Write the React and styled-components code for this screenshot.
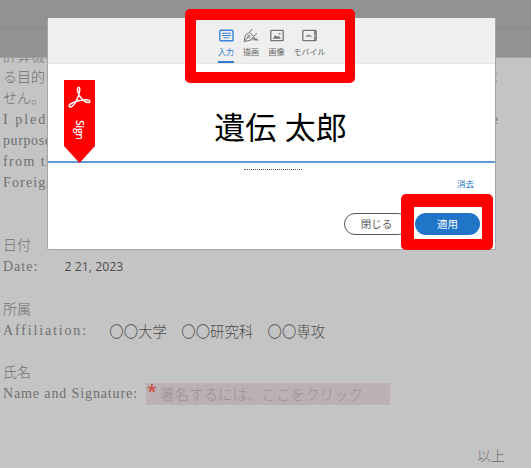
import React from 'react';
import styled, { createGlobalStyle } from 'styled-components';

const Global = createGlobalStyle`
  * { box-sizing: border-box; }
  body { margin: 0; background: #c4c4c4; overflow: hidden; }
`;

const Page = styled.main`
  position: relative;
  width: 531px;
  height: 468px;
  overflow: hidden;
  background: #c4c4c4;
  font-family: 'Noto Sans', 'Noto Sans CJK JP', sans-serif;
`;

const TopBars = styled.header`
  position: relative;
  z-index: 1;
  height: 58px;
  background: #929292;
  border-bottom: 1px solid #a0a0a0;
  &::before {
    content: '';
    display: block;
    height: 28px;
    border-bottom: 1px solid #8a8a8a;
  }
`;

const Document = styled.section`
  margin-top: -12px;
  padding: 0 25px 0 3px;
  color: #707070;
  font: 300 14px/21.06px 'Liberation Serif', 'Noto Sans CJK JP', serif;
`;

const Line = styled.div`
  display: flex;
  justify-content: ${(p) => (p.$end ? 'flex-end' : 'space-between')};
  height: 21.06px;
  padding-right: ${(p) => (p.$end ? 1 : 7)}px;
  white-space: pre;
`;

const Latin = styled.span`
  font-size: 14px;
  letter-spacing: ${(p) => p.$track}px;
`;

const Field = styled.div`
  display: flex;
  align-items: center;
  height: 21.06px;
  white-space: pre;
`;

const Label = styled(Latin)`
  flex: none;
  width: ${(p) => p.$cells * 7.11}px;
`;

const Value = styled.span`
  margin-left: ${(p) => p.$gap}px;
  color: #4c4c4c;
  font: ${(p) => (p.$small ? '400 12.3px' : '300 14.4px')}/19px ${(p) => (p.$small ? "'Open Sans'" : "'Noto Sans CJK JP'")}, sans-serif;
`;

const SignField = styled.div`
  display: flex;
  width: 244px;
  height: 22px;
  margin: 2px 0 0 8px;
  background: #bbb0b2;
  border: 1px solid #c0b0b5;
  color: #969296;
  font: 300 14.5px/20px 'Noto Sans CJK JP', sans-serif;
`;

const Required = styled.span`
  width: 13px;
  color: #d04a48;
  font: 600 18px/15px 'Open Sans', sans-serif;
`;

const Dialog = styled.section`
  position: absolute;
  z-index: 2;
  left: 47px;
  top: 18px;
  width: 449px;
  height: 232px;
  display: flex;
  flex-direction: column;
  background: #fff;
  border: 1px solid #a5a5a5;
  border-top: 0;
  border-radius: 3px 0 0 2px;
`;

const Tabs = styled.nav`
  display: flex;
  height: 46px;
  padding: 10px 0 0 166px;
  background: #efefef;
  border-bottom: 1px solid #e6e6e6;
`;

const Tab = styled.button`
  display: flex;
  flex-direction: column;
  align-items: center;
  width: ${(p) => p.$width}px;
  padding: 0;
  border: 0;
  background: none;
  color: ${(p) => (p.$active ? '#2c7bd0' : '#666')};
  font: 400 8px/12px 'Noto Sans CJK JP', sans-serif;
  white-space: nowrap;
  svg { display: block; height: 16px; margin-bottom: 2px; color: ${(p) => (p.$active ? '#3a86d8' : '#747474')}; }
`;

const TabLabel = styled.span`
  display: block;
  height: 17px;
  border-bottom: 2px solid ${(p) => (p.$active ? '#2c7bd0' : 'transparent')};
`;

const SignArea = styled.div`
  position: relative;
  display: flex;
  justify-content: center;
  height: 99px;
  border-bottom: 2px solid #619bd5;
`;

const Name = styled.div`
  padding: 39px 0 0 18px;
  color: #000;
  font: 400 31px/46px 'Noto Sans CJK JP', sans-serif;
  word-spacing: 1.5px;
  white-space: nowrap;
`;

const Ribbon = styled.div`
  position: absolute;
  left: 16px;
  top: 16px;
  width: 31px;
  height: 83px;
  background: #f00;
  clip-path: polygon(0 0, 100% 0, 100% 66px, 50% 100%, 0 66px);
  svg { display: block; margin: 6px 0 0 4px; }
`;

const RibbonText = styled.span`
  display: block;
  width: 12px;
  height: 22px;
  margin: 10px 0 0 10px;
  color: #fff;
  font: 600 10.5px/12px 'Open Sans', sans-serif;
  letter-spacing: -0.4px;
  writing-mode: vertical-rl;
`;

const Dotted = styled.div`
  width: 58px;
  height: 2px;
  margin: 6px 0 0 196px;
  border-top: 1px dotted #555;
`;

const Clear = styled.button`
  align-self: flex-end;
  margin: 5px 21px 0 0;
  padding: 0;
  border: 0;
  background: none;
  color: #2474ca;
  font: 400 8.5px/14px 'Noto Sans CJK JP', sans-serif;
`;

const Actions = styled.footer`
  display: flex;
  gap: 6px;
  margin: 23px 0 0 296px;
`;

const Action = styled.button`
  width: 65px;
  height: 22px;
  padding: 0;
  border-radius: 11px;
  border: ${(p) => (p.$primary ? '0' : '1px solid #555')};
  background: ${(p) => (p.$primary ? '#2175c9' : '#fff')};
  color: ${(p) => (p.$primary ? '#fff' : '#5b5b5b')};
  font: 400 10.5px/20px 'Noto Sans CJK JP', sans-serif;
`;

const Highlight = styled.div`
  position: absolute;
  z-index: 3;
  left: ${(p) => p.$x}px;
  top: ${(p) => p.$y}px;
  width: ${(p) => p.$w}px;
  height: ${(p) => p.$h}px;
  border: solid #f00;
  border-width: ${(p) => p.$edges};
  border-radius: 5px;
  pointer-events: none;
`;

const KeyboardIcon = () => (
  <svg width="15" height="16" viewBox="0 0 15 16" fill="none" stroke="currentColor">
    <rect x=".8" y="2.3" width="13.2" height="10.4" rx=".8" strokeWidth="1.4" />
    <path d="M3 5.2h9M3 7.5h9M4.5 9.8h6" strokeWidth="1.1" />
  </svg>
);

const PenIcon = () => (
  <svg width="16" height="16" viewBox="0 0 16 16" fill="none" stroke="currentColor" strokeWidth="1">
    <path d="M1.2 13.5 2.2 7.2 6.5 4.4 10.5 8.4 8 12 1.2 13.5Zm0 0 4-4.8" />
    <circle cx="5.8" cy="8.4" r="1.1" />
    <path d="M6.5 4.4 9.2.9M10.5 8.4 14 5.5M9.4 12.4l2-3 .3 3 1.4-2 .4 2 1-1 .8 1.2" />
  </svg>
);

const ImageIcon = () => (
  <svg width="14" height="16" viewBox="0 0 14 16" fill="none" stroke="currentColor">
    <rect x=".8" y="2.4" width="12.4" height="10.3" rx=".5" strokeWidth="1.3" />
    <path d="M2.8 10.8 5.3 7l2 2 1.2-1.2 2.7 3Z" fill="currentColor" stroke="none" />
    <circle cx="9.6" cy="5.6" r=".9" fill="currentColor" stroke="none" />
  </svg>
);

const MobileIcon = () => (
  <svg width="15" height="16" viewBox="0 0 15 16" fill="none" stroke="currentColor">
    <rect x=".8" y="2.4" width="13.4" height="10.3" rx="1" strokeWidth="1.3" />
    <path d="M12.9 3v9.5" strokeWidth="1.5" />
    <path d="m4 8.8 1.5-2 .3 2 1.4-2 .3 2 1-1.2.5 1h1" strokeWidth=".8" />
    <circle cx="12.9" cy="7.6" r=".5" fill="#fff" stroke="none" />
  </svg>
);

const AcrobatIcon = () => (
  <svg width="24" height="24" viewBox="0 0 24 24" fill="none" stroke="#fff" strokeWidth="1.5">
    <path d="M10.4 7.5C8.7 3.5 9.4 1.5 10.7 1.5c1.5 0 1.4 3.3-.2 8C9.1 14 5.3 21 2.6 21 .1 21 .6 18.5 4.7 16.8 9 15 14.5 13.3 19 13.7c3.6.3 3.5 2.8 1.3 2.8-3.8 0-8.3-4.6-9.9-9Z" />
  </svg>
);

export default function App() {
  return (
    <>
      <Global />
      <Page>
        <TopBars />
        <Document>
          <Line>計算機の</Line>
          <Line><span>る目的</span><span>ま</span></Line>
          <Line>せん。</Line>
          <Line><Latin $track={2}>I pled</Latin><Latin $track={1}>the</Latin></Line>
          <Line><Latin $track={0.6}>purposes</Latin></Line>
          <Line><Latin $track={1.4}>from the</Latin></Line>
          <Line><Latin $track={1.15}>Foreign</Latin></Line>
          <Line />
          <Line />
          <Line>日付</Line>
          <Field><Label $cells={5} $track={1}>Date:</Label><Value $gap={26} $small>2 21, 2023</Value></Field>
          <Line />
          <Line>所属</Line>
          <Field><Label $cells={12} $track={1.85}>Affiliation:</Label><Value $gap={21}>〇〇大学　〇〇研究科　〇〇専攻</Value></Field>
          <Line />
          <Line>氏名</Line>
          <Field>
            <Label $cells={19} $track={0.88}>Name and Signature:</Label>
            <SignField><Required>*</Required>署名するには、ここをクリック</SignField>
          </Field>
          <Line />
          <Line />
          <Line $end>以上</Line>
        </Document>
        <Dialog>
          <Tabs>
            <Tab $active $width={24}><KeyboardIcon /><TabLabel $active>入力</TabLabel></Tab>
            <Tab $width={26}><PenIcon /><TabLabel>描画</TabLabel></Tab>
            <Tab $width={25}><ImageIcon /><TabLabel>画像</TabLabel></Tab>
            <Tab $width={41}><MobileIcon /><TabLabel>モバイル</TabLabel></Tab>
          </Tabs>
          <SignArea>
            <Name>遺伝 太郎</Name>
            <Ribbon><AcrobatIcon /><RibbonText>Sign</RibbonText></Ribbon>
          </SignArea>
          <Dotted />
          <Clear>消去</Clear>
          <Actions>
            <Action>閉じる</Action>
            <Action $primary>適用</Action>
          </Actions>
        </Dialog>
        <Highlight $x={185} $y={9} $w={170} $h={74} $edges="11px 10px 11px 11px" />
        <Highlight $x={401} $y={194} $w={92} $h={56} $edges="13px 11px 11px 13px" />
      </Page>
    </>
  );
}
